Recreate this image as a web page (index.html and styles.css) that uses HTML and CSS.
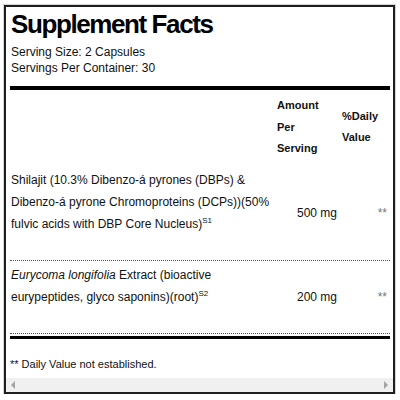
FILE: index.html
```html
<!DOCTYPE html>
<html lang="en">

<head>
    <meta charset="UTF-8">
    <meta name="viewport" content="width=device-width, initial-scale=1.0">
    <title>Supplement Facts</title>
    <link rel="stylesheet" href="styles.css">
</head>

<body>
    <div class="panel">
        <div class="facts">
            <h1 class="facts-title">Supplement Facts</h1>
            <p class="serving">Serving Size: 2 Capsules</p>
            <p class="serving">Servings Per Container: 30</p>

            <div class="bar"></div>

            <div class="row head">
                <div class="cell name"></div>
                <div class="cell amount">Amount<br>Per<br>Serving</div>
                <div class="cell dv">%Daily<br>Value</div>
            </div>

            <div class="row item">
                <div class="cell name">Shilajit (10.3% Dibenzo-á pyrones (DBPs) &amp; Dibenzo-á pyrone Chromoproteins (DCPs))(50% fulvic acids with DBP Core Nucleus)<sup>S1</sup></div>
                <div class="cell amount">500 mg</div>
                <div class="cell dv">**</div>
            </div>

            <div class="row item">
                <div class="cell name"><em>Eurycoma longifolia</em> Extract (bioactive eurypeptides, glyco saponins)(root)<sup>S2</sup></div>
                <div class="cell amount">200 mg</div>
                <div class="cell dv">**</div>
            </div>

            <div class="bar thin"></div>

            <p class="note">** Daily Value not established.</p>
        </div>

        <div class="scrollbar">
            <span class="arrow left"></span>
            <span class="arrow right"></span>
        </div>
    </div>
</body>

</html>
```

FILE: styles.css
```css
html,
body {
    padding: 0;
    margin: 0;
    background: #fff;
}

body {
    font-family: "Liberation Sans", Arial, sans-serif;
    color: #111;
}

.panel {
    box-sizing: border-box;
    display: flex;
    flex-direction: column;
    width: 391px;
    height: 389px;
    margin: 5px 0 0 4px;
    border: 2px solid #1e1e1e;
    box-shadow: 0 0 0 1px #d4d4d4;
}

.facts {
    padding: 2px 3px 0 4px;
}

.facts-title {
    margin: 0 0 5px 1px;
    font-size: 26px;
    line-height: 30px;
    font-weight: bold;
    letter-spacing: -1.4px;
    color: #000;
}

.serving {
    margin: 0 0 0 1px;
    font-size: 12px;
    line-height: 16px;
}

.bar {
    height: 4px;
    margin-top: 10px;
    background: #000;
}

.bar.thin {
    height: 3px;
    margin-top: 2px;
}

.row {
    display: grid;
    grid-template-columns: 1fr 65px 51px;
    align-items: center;
}

.row.head {
    padding: 5px 0 6px;
    font-size: 11px;
    font-weight: bold;
    line-height: 21.5px;
}

.row.head .amount,
.row.head .dv {
    text-align: left;
    padding-left: 3px;
}

.row.item {
    padding: 3px 0;
    font-size: 12px;
    line-height: 22px;
    border-bottom: 1px dotted #555;
}

.row.item .name {
    padding: 0 0 22px 1px;
}

.row.item .amount {
    text-align: right;
    padding-right: 2px;
}

.row.item .dv {
    text-align: right;
    padding-right: 3px;
    color: #777;
}

sup {
    font-size: 8px;
    line-height: 1;
    vertical-align: 5px;
}

.note {
    margin: 17px 0 0;
    font-size: 11px;
    line-height: 16px;
}

.scrollbar {
    display: flex;
    justify-content: space-between;
    align-items: center;
    height: 14px;
    margin-top: auto;
    padding: 0 5px;
    background: #f0f0f0;
}

.arrow {
    width: 0;
    height: 0;
    border-top: 4px solid transparent;
    border-bottom: 4px solid transparent;
}

.arrow.left {
    border-right: 4px solid #a3a3a3;
}

.arrow.right {
    border-left: 4px solid #a3a3a3;
}
```
